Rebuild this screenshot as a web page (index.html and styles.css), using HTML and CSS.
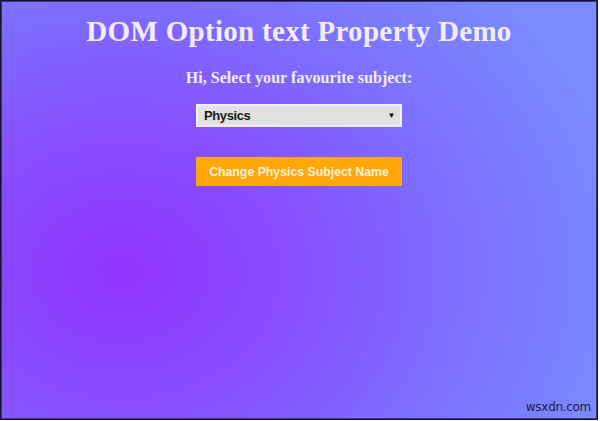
FILE: index.html
```html
<!DOCTYPE html>
<html lang="en">
<head>
<meta charset="utf-8">
<title>DOM Option text Property Demo</title>
<link rel="stylesheet" href="styles.css">
</head>
<body>
<div class="frame">
  <main class="page">
    <h1 class="title">DOM Option text Property Demo</h1>
    <h3 class="prompt">Hi, Select your favourite subject:</h3>
    <div class="select">
      <span class="select-value">Physics</span>
      <span class="select-arrow">&#9660;</span>
    </div>
    <button class="btn" type="button">Change Physics Subject Name</button>
  </main>
  <span class="watermark">wsxdn.com</span>
</div>
</body>
</html>
```
FILE: styles.css
```css
html, body {
  margin: 0;
  padding: 0;
  background: #ffffff;
}
.frame {
  position: relative;
  box-sizing: border-box;
  width: 598px;
  height: 420px;
  border: 1px solid #151525;
  box-shadow: inset 0 0 0 1px #3a2f8a;
  background:
    radial-gradient(ellipse 520px 420px at 120px 270px, #9233ff 0%, #8650ff 35%, #7c74ff 70%, #7a8cff 100%);
  overflow: hidden;
}
.page {
  display: flex;
  flex-direction: column;
  align-items: center;
  font-family: "Liberation Serif", "Times New Roman", serif;
  color: #f3ecff;
  padding-top: 13px;
}
.title {
  margin: 0;
  font-size: 29px;
  letter-spacing: 0.3px;
  font-weight: bold;
  line-height: 34px;
}
.prompt {
  margin: 20px 0 0;
  font-size: 16px;
  letter-spacing: 0.05px;
  font-weight: bold;
  line-height: 19px;
}
.select {
  margin-top: 17px;
  box-sizing: border-box;
  width: 206px;
  height: 23px;
  display: flex;
  align-items: center;
  justify-content: space-between;
  padding: 0 5px 0 6px;
  background: #e1e1e1;
  border: 2px solid #f2eefc;
  font-family: "Liberation Sans", Arial, sans-serif;
  font-weight: bold;
  font-size: 13px;
  letter-spacing: -0.4px;
  color: #1a1a1a;
}
.select-arrow {
  font-size: 8px;
  color: #111;
}
.btn {
  margin-top: 30px;
  width: 206px;
  height: 29px;
  border: 1px solid #f5a818;
  background: #ffa709;
  color: #fff2d8;
  font-family: "Liberation Sans", Arial, sans-serif;
  font-weight: bold;
  font-size: 12.3px;
  padding: 0;
}
.watermark {
  position: absolute;
  right: 6px;
  bottom: 5px;
  font-family: "DejaVu Sans", sans-serif;
  font-size: 12px;
  color: #1f1f3a;
  letter-spacing: -0.3px;
}
```
